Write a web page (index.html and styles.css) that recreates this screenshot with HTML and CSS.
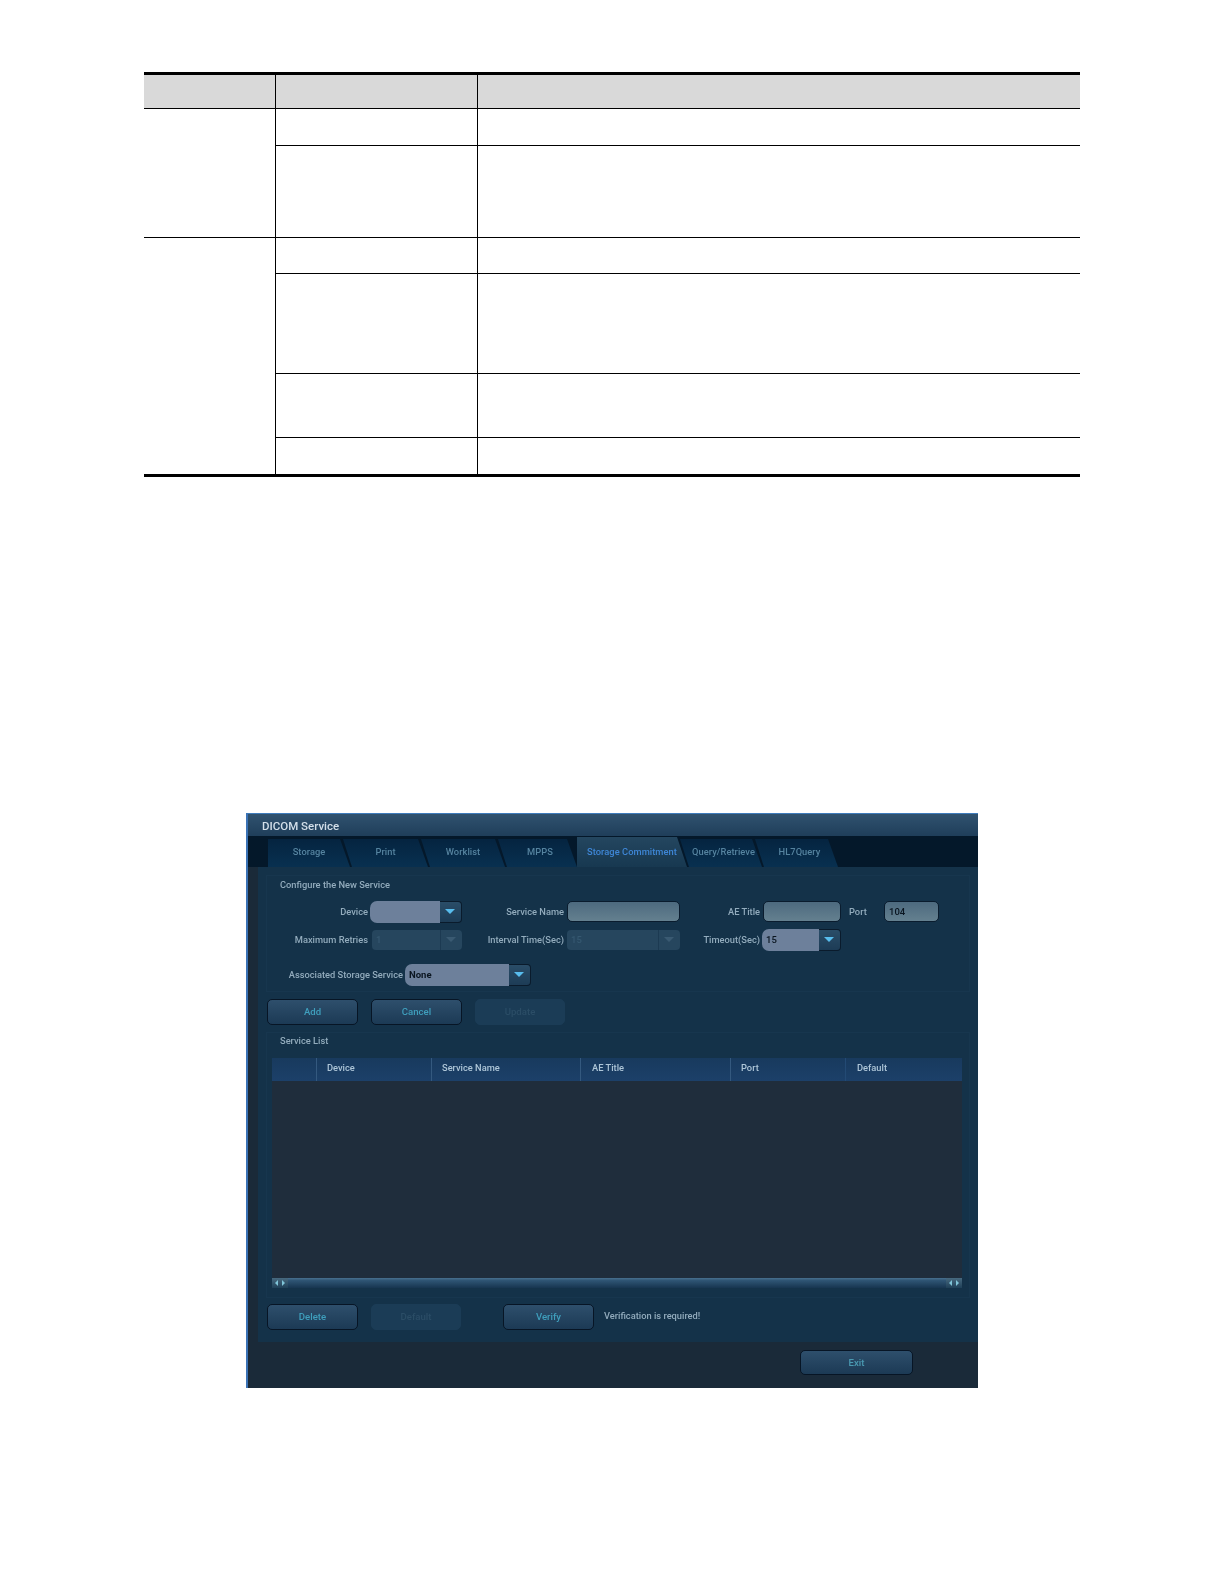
FILE: index.html
```html
<!DOCTYPE html>
<html lang="en">
<head>
<meta charset="utf-8">
<title>DICOM Service</title>
<link rel="stylesheet" href="styles.css">
</head>
<body>
<table class="doc-table">
  <colgroup><col class="c1"><col class="c2"><col class="c3"></colgroup>
  <tr class="head"><td class="divide"></td><td class="divide"></td><td></td></tr>
  <tr class="r1"><td rowspan="2" class="divide"></td><td class="divide"></td><td></td></tr>
  <tr class="r2"><td class="divide"></td><td></td></tr>
  <tr class="r3"><td rowspan="4" class="divide last"></td><td class="divide"></td><td></td></tr>
  <tr class="r4"><td class="divide"></td><td></td></tr>
  <tr class="r5"><td class="divide"></td><td></td></tr>
  <tr class="r6"><td class="divide last"></td><td class="last"></td></tr>
</table>

<section class="dialog">
  <header class="title">DICOM Service</header>
  <nav class="tabs">
    <span class="tab t1">Storage</span>
    <span class="tab t2">Print</span>
    <span class="tab t3">Worklist</span>
    <span class="tab t4">MPPS</span>
    <span class="tab active">Storage Commitment</span>
    <span class="tab t6">Query/Retrieve</span>
    <span class="tab t7">HL7Query</span>
  </nav>
  <main class="panel">
    <div class="group config">
      <div class="legend">Configure the New Service</div>
      <div class="fields first">
        <label class="lab">Device</label>
        <div class="select big"><span class="value"></span><span class="arrow"></span></div>
        <label class="lab">Service Name</label>
        <div class="input"></div>
        <label class="lab">AE Title</label>
        <div class="input"></div>
        <label class="lab port">Port</label>
        <div class="input">104</div>
      </div>
      <div class="fields second">
        <label class="lab">Maximum Retries</label>
        <div class="select off narrow"><span class="value">1</span><span class="arrow"></span></div>
        <label class="lab">Interval Time(Sec)</label>
        <div class="select off"><span class="value">15</span><span class="arrow"></span></div>
        <label class="lab">Timeout(Sec)</label>
        <div class="select big wide"><span class="value">15</span><span class="arrow"></span></div>
      </div>
      <div class="assoc">
        <label class="lab">Associated Storage Service</label>
        <div class="select big"><span class="value">None</span><span class="arrow"></span></div>
      </div>
    </div>
    <div class="actions top-actions">
      <button class="btn">Add</button>
      <button class="btn">Cancel</button>
      <button class="btn off">Update</button>
    </div>
    <div class="group list">
      <div class="legend">Service List</div>
      <div class="thead">
        <span class="th th0"></span>
        <span class="th th1">Device</span>
        <span class="th th2">Service Name</span>
        <span class="th th3">AE Title</span>
        <span class="th th4">Port</span>
        <span class="th th5">Default</span>
      </div>
      <div class="tbody"></div>
      <div class="scroll">
        <span class="ends"><i class="tri left"></i><i class="tri right"></i></span>
        <span class="ends"><i class="tri left"></i><i class="tri right"></i></span>
      </div>
    </div>
    <div class="actions bottom-actions">
      <button class="btn">Delete</button>
      <button class="btn off">Default</button>
      <button class="btn verify">Verify</button>
      <span class="note">Verification is required!</span>
    </div>
  </main>
  <footer class="foot"><button class="btn exit">Exit</button></footer>
</section>
</body>
</html>
```

FILE: styles.css
```css
* { box-sizing: border-box; }
html, body { margin: 0; padding: 0; background: #fff; }
body { width: 1224px; height: 1584px; padding-top: 72px; font-family: Roboto, "Liberation Sans", sans-serif; overflow: hidden; }

.doc-table { margin-left: 144px; width: 936px; border-collapse: separate; border-spacing: 0; table-layout: fixed; border-top: 3px solid #000; }
.doc-table td { padding: 0; border-bottom: 1px solid #000; }
.doc-table td.divide { border-right: 1px solid #000; }
.doc-table td.last { border-bottom: 3px solid #000; }
.c1 { width: 132px; }
.c2 { width: 202px; }
.head td { background: #d9d9d9; }
.head { height: 34px; }
.r1 { height: 37px; }
.r2 { height: 92px; }
.r3 { height: 36px; }
.r4 { height: 100px; }
.r5 { height: 64px; }
.r6 { height: 39px; }

.dialog { margin: 336px 0 0 246px; width: 732px; height: 575px; background: #1a2a39; border-left: 2px solid #3a72b5; border-top: 1px solid #3f7cbc; display: flex; flex-direction: column; filter: blur(.35px); }
.title { height: 22px; padding-left: 14px; line-height: 25px; font-size: 11.5px; font-weight: 500; color: #d3dfe9; background: linear-gradient(#30526f, #1f3e5a); }
.tabs { height: 31px; padding: 3px 0 0 20px; background: #04182a; display: flex; }
.tab { height: 28px; margin-left: -7px; line-height: 25px; text-align: center; font-size: 9.3px; font-weight: 500; letter-spacing: .05px; color: #55839f; background: linear-gradient(#052440, #083050); clip-path: polygon(0 0, calc(100% - 10px) 0, 100% 100%, 9px 100%); }
.t1 { width: 82px; margin-left: 0; clip-path: polygon(0 0, calc(100% - 10px) 0, 100% 100%, 0 100%); }
.t2 { width: 85px; }
.t3 { width: 84px; }
.t4 { width: 79px; padding-left: 5px; }
.tab.active { width: 110px; margin: -2px 0 0; height: 30px; line-height: 29px; color: #3e86d6; background: linear-gradient(#24465f, #173850); clip-path: polygon(0 0, calc(100% - 10px) 0, 100% 100%, 0 100%); }
.t6 { width: 82px; padding-left: 5px; }
.t7 { width: 83px; padding-left: 6px; }

.panel { margin-left: 10px; height: 475px; background: #143249; padding-top: 8px; }
.group { margin-left: 8px; width: 704px; border: 1px solid #17364e; }
.legend { height: 12px; line-height: 12px; font-size: 9.3px; font-weight: 500; color: #93acbd; padding-left: 13px; }
.config { height: 117px; padding-top: 3px; }
.config .legend { margin-bottom: 10px; }
.fields { display: grid; grid-template-columns: 103px 92px 105px 113px 83px 78px 43px 55px; margin-bottom: 6px; }
.first { height: 22px; }
.second { height: 23px; }
.lab { font-size: 9.3px; font-weight: 500; color: #93acbd; text-align: right; padding-right: 2px; line-height: 22px; white-space: nowrap; }
.fields .lab:nth-child(3), .fields .lab:nth-child(5) { padding-right: 3px; }
.fields .port { text-align: left; padding: 0 0 0 8px; }
.input { height: 21px; margin-top: 0; border-radius: 5px; background: linear-gradient(#4d6a7f, #64808f); border: 1px solid #0a1c2e; font-size: 9.5px; font-weight: 500; line-height: 19px; padding-left: 4px; color: #0a1520; }
.select { display: flex; height: 20px; margin-top: 1px; }
.select.big { height: 22px; margin-top: 0; }
.select .value { flex: 1; font-size: 9.5px; font-weight: 500; line-height: 20px; padding-left: 4px; color: #0a1520; background: #6d809b; border-radius: 7px 0 0 7px; }
.select.big .value { line-height: 22px; }
.select .arrow { position: relative; width: 22px; background: linear-gradient(#2a4d68, #1d3c56); border: 1px solid #0a1b2c; border-left: 0; border-radius: 0 4px 4px 0; }
.select .arrow::after { content: ""; position: absolute; left: 5px; top: 50%; margin-top: -3px; border-style: solid; border-width: 5px 5px 0; border-color: #58bdee transparent transparent; }
.select.off .value { background: #26465e; color: #355870; border-radius: 4px 0 0 4px; }
.select.off .arrow { background: #26465e; border: 0; border-left: 1px solid #1c3a52; }
.select.off .arrow::after { border-top-color: #3a5a72; }
.select.narrow { margin-left: 2px; }
.select.wide { margin-left: -1px; width: 79px; }
.assoc { display: flex; margin-top: 12px; }
.assoc .lab { width: 138px; padding-right: 2px; }
.assoc .select { width: 126px; }
.assoc .value { font-weight: 700; }

.actions { display: flex; align-items: center; margin-left: 9px; }
.top-actions { margin-top: 7px; }
.bottom-actions { margin-top: 6px; }
.btn { width: 91px; height: 26px; margin: 0 13px 0 0; padding: 0 0 1px; font: 500 9.6px Roboto, "Liberation Sans", sans-serif; color: #3f9fbd; background: linear-gradient(#2e4f6c, #1c3a55); border: 1px solid #071525; border-radius: 5px; }
.btn.off { width: 90px; color: #2b4d66; background: #1b3c56; border-color: #1b3c56; }
.verify { margin-left: 29px; margin-right: 10px; }
.note { font-size: 9.3px; font-weight: 500; color: #93acbd; margin-top: -4px; }

.list { height: 266px; margin-top: 7px; padding: 2px 0 0 5px; }
.list .legend { margin-bottom: 11px; padding-left: 8px; }
.thead { width: 690px; height: 23px; display: flex; background: linear-gradient(#183a5e, #1c4069); }
.th { height: 23px; font-size: 9.3px; font-weight: 500; line-height: 20px; color: #aec6d8; border-right: 1px solid #34597f; }
.th0 { width: 45px; }
.th1 { width: 115px; padding-left: 10px; }
.th2 { width: 149px; padding-left: 10px; }
.th3 { width: 150px; padding-left: 11px; }
.th4 { width: 115px; padding-left: 10px; border-right-color: #234a74; }
.th5 { flex: 1; padding-left: 11px; border-right: 0; }
.tbody { width: 690px; height: 197px; background: #1f2d3c; }
.scroll { width: 690px; height: 10px; display: flex; justify-content: space-between; background: linear-gradient(#48708f 0, #2f5574 25%, #173550 100%); }
.ends { width: 16px; display: flex; align-items: center; justify-content: space-around; padding: 0 1px; background: linear-gradient(#47697f, #1f4058); }
.tri { width: 0; height: 0; border-style: solid; border-width: 3px 0; border-color: transparent; }
.tri.left { border-right: 3px solid #7fc4d8; }
.tri.right { border-left: 3px solid #7fc4d8; }

.foot { flex: 1; display: flex; padding: 8px 0 0 552px; }
.btn.exit { width: 113px; height: 25px; margin: 0; color: #4a9ab2; }
```
